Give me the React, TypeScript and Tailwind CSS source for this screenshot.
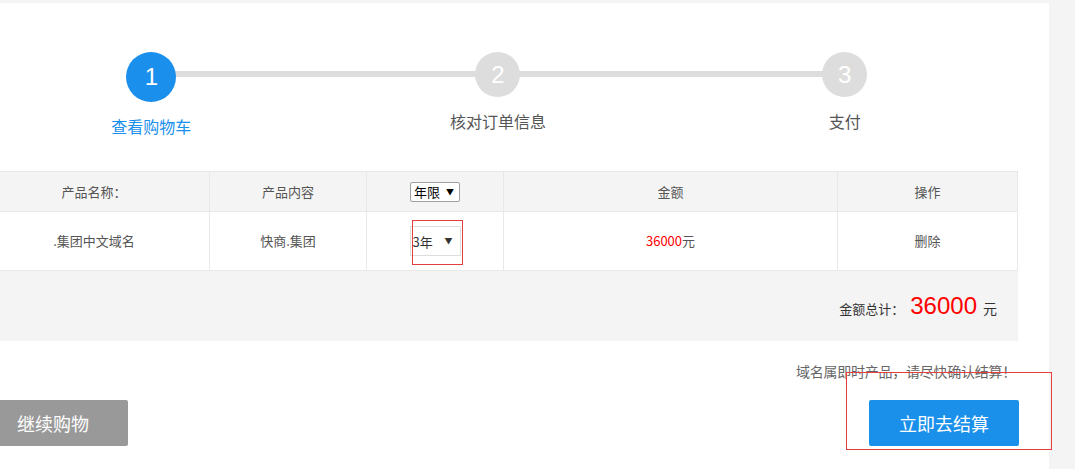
import React from "react";

const cjk = { fontFamily: '"Noto Sans CJK SC", "Noto Sans", sans-serif' };
const num = { fontFamily: '"Liberation Sans", "Noto Sans CJK SC", sans-serif' };

function Step({ n, label, active, big }: { n: string; label: string; active?: boolean; big?: boolean }) {
  return (
    <div className="flex flex-col items-center">
      <div
        className={`${big ? "w-[50px] h-[50px]" : "w-[45px] h-[45px]"} rounded-full flex items-center justify-center text-white text-[24px] leading-none ${
          active ? "bg-[#1a8fec]" : "bg-[#dddddd]"
        }`}
        style={num}
      >
        {n}
      </div>
      <div
        className={`mt-[12px] text-[16px] leading-[24px] ${active ? "text-[#1a8fec]" : "text-[#555555]"}`}
        style={cjk}
      >
        {label}
      </div>
    </div>
  );
}

export default function App() {
  return (
    <div className="w-[1075px] h-[469px] bg-[#f4f4f4] overflow-hidden" style={cjk}>
      <div className="w-[1049px] h-[466px] mt-[3px] bg-white">
        <div className="ml-[-22px] w-[1040px]">
          {/* steps */}
          <div className="h-[168px] pt-[49px]">
            <div className="relative grid grid-cols-3 items-start">
              <div className="absolute left-[175px] right-[173px] top-[19px] h-[6px] bg-[#dddddd]" />
              <div className="relative flex justify-center">
                <Step n="1" label="查看购物车" active big />
              </div>
              <div className="relative flex justify-center">
                <Step n="2" label="核对订单信息" />
              </div>
              <div className="relative flex justify-center">
                <Step n="3" label="支付" />
              </div>
            </div>
          </div>

          {/* table */}
          <div className="border border-[#e8e8e8] text-[13px] text-[#555555]">
            <div className="grid grid-cols-[230px_157px_137px_334px_180px] h-[40px] bg-[#f4f4f4] border-b border-[#e8e8e8]">
              <div className="flex items-center justify-center">产品名称：</div>
              <div className="flex items-center justify-center border-l border-[#e8e8e8]">产品内容</div>
              <div className="flex items-center justify-center border-l border-[#e8e8e8]">
                <div className="w-[50px] h-[20px] border border-[#a0a0a0] rounded-[2px] bg-white flex items-center justify-between pl-[3px] pr-[5px] text-black text-[13px] leading-none">
                  <span>年限</span>
                  <span className="text-[8px]">▼</span>
                </div>
              </div>
              <div className="flex items-center justify-center border-l border-[#e8e8e8]">金额</div>
              <div className="flex items-center justify-center border-l border-[#e8e8e8]">操作</div>
            </div>
            <div className="grid grid-cols-[230px_157px_137px_334px_180px] h-[58px] bg-white">
              <div className="flex items-center justify-center">.集团中文域名</div>
              <div className="flex items-center justify-center border-l border-[#e8e8e8]">快商.集团</div>
              <div className="flex items-center justify-center border-l border-[#e8e8e8]">
                <div className="relative">
                  <div className="w-[51px] h-[30px] border border-[#dddddd] bg-white flex items-center justify-between pl-[2px] pr-[7px] text-[#333333] text-[13px] leading-none">
                    <span>3年</span>
                    <span className="text-[8px]">▼</span>
                  </div>
                  <div className="absolute left-[2px] top-[-6px] w-[51px] h-[45px] border border-[#e53e3e]" />
                </div>
              </div>
              <div className="flex items-center justify-center border-l border-[#e8e8e8]">
                <span className="text-[#ff0000]">36000</span>
                <span>元</span>
              </div>
              <div className="flex items-center justify-center border-l border-[#e8e8e8]">删除</div>
            </div>
          </div>

          {/* summary */}
          <div className="h-[70px] bg-[#f4f4f4] flex items-center justify-end pr-[21px]">
            <div className="flex items-baseline text-[#333333]">
              <span className="text-[13px]">金额总计：</span>
              <span className="text-[24px] leading-none text-[#ff0000] ml-[6px] mr-[6px]" style={num}>
                36000
              </span>
              <span className="text-[14px]">元</span>
            </div>
          </div>

          {/* notice */}
          <div className="mt-[20px] flex justify-end pr-[2px]">
            <span className="text-[14px] leading-[20px] text-[#666666] tracking-[-0.25px]">
              域名属即时产品，请尽快确认结算！
            </span>
          </div>

          {/* buttons */}
          <div className="mt-[19px] flex justify-between items-start">
            <div className="w-[150px] h-[46px] bg-[#999999] rounded-[2px] flex items-center justify-center text-white text-[18px]">
              继续购物
            </div>
            <div className="relative mr-[-1px]">
              <div className="w-[150px] h-[46px] bg-[#1a90eb] rounded-[2px] flex items-center justify-center text-white text-[18px]">
                立即去结算
              </div>
              <div className="absolute left-[-23px] top-[-28px] w-[206px] h-[78px] border border-[#e53e3e]" />
            </div>
          </div>
        </div>
      </div>
    </div>
  );
}
